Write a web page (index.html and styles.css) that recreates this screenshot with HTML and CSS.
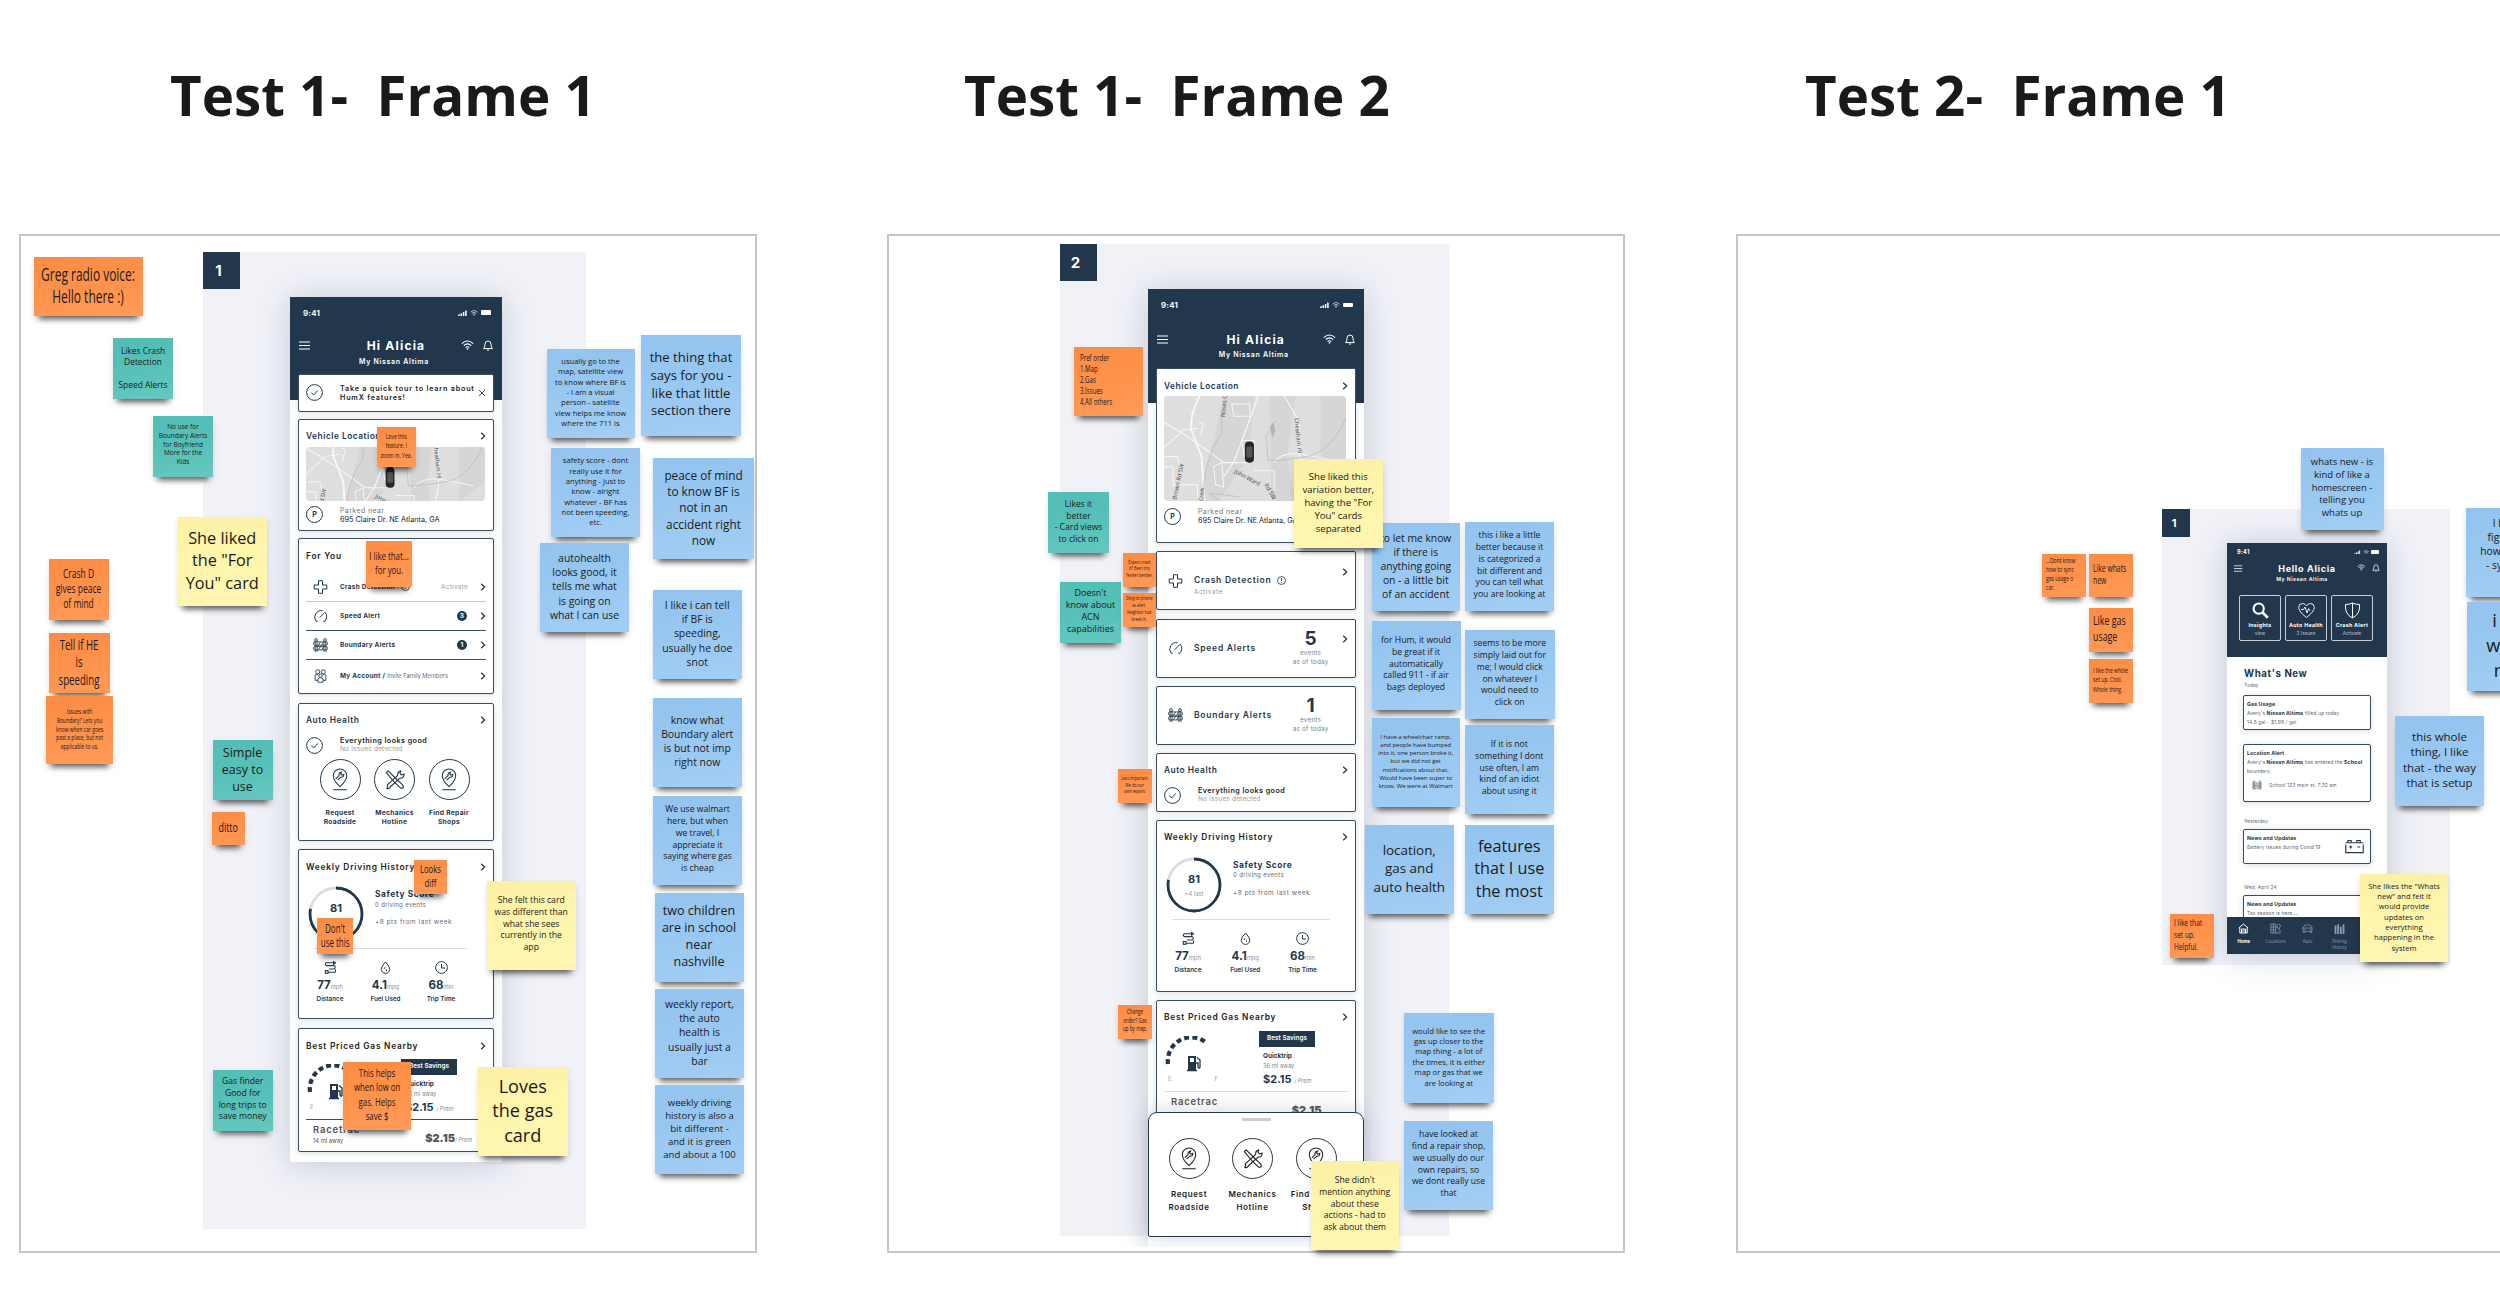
FILE: index.html
```html
<!DOCTYPE html>
<html lang="en">
<head>
  <meta charset="UTF-8" />
  <meta name="viewport" content="width=device-width, initial-scale=1.0"/>
  <title>User testing board</title>
  <link rel="stylesheet" href="styles.css">
</head>
<body>
  <!-- icons -->
  <svg class="defs">
    <symbol id="chev" viewBox="0 0 6 8"><path d="M1.2 .8 4.6 4 1.2 7.2" fill="none" stroke="currentColor" stroke-width="1.3"/></symbol>
    <symbol id="menu" viewBox="0 0 11 9"><path d="M0 1h11M0 4.5h11M0 8h11" stroke="currentColor" stroke-width="1"/></symbol>
    <symbol id="signal" viewBox="0 0 9 6"><path d="M1 6V4.3M3.3 6V3.3M5.6 6V2M7.9 6V.5" stroke="currentColor" stroke-width="1.5"/></symbol>
    <symbol id="wifi" viewBox="0 0 13 10"><path d="M.8 3.6q5.7-5.2 11.4 0M2.7 5.6q3.8-3.4 7.6 0M4.6 7.5q1.9-1.6 3.8 0" fill="none" stroke="currentColor" stroke-width="1.1"/><circle cx="6.5" cy="8.9" r=".8" fill="currentColor"/></symbol>
    <symbol id="bell" viewBox="0 0 10 11"><path d="M.6 8.6h8.8Q8 7.2 8 4.2 8 1 5 1 2 1 2 4.2 2 7.2.6 8.6ZM4 9.8q1 .9 2 0" fill="none" stroke="currentColor" stroke-width="1"/></symbol>
    <symbol id="check" viewBox="0 0 17 17"><circle cx="8.5" cy="8.5" r="7.9" fill="none" stroke="currentColor" stroke-width="1"/><path d="M5.3 8.6 7.6 11l4.2-4.6" fill="none" stroke="currentColor" stroke-width="1"/></symbol>
    <symbol id="close" viewBox="0 0 8 8"><path d="M1 1l6 6M7 1 1 7" stroke="currentColor" stroke-width=".8"/></symbol>
    <symbol id="cross" viewBox="0 0 14 14"><path d="M5 .7h4V5h4.3v4H9v4.3H5V9H.7V5H5Z" fill="none" stroke="currentColor" stroke-width="1" stroke-linejoin="round"/></symbol>
    <symbol id="speed" viewBox="0 0 15 13"><path d="M3.2 11.8A6.6 6.6 0 0 1 9.6 1.2M12 2.6a6.6 6.6 0 0 1-.3 9.2M3.2 11.8h1.5M11.7 11.8h-1.5" fill="none" stroke="currentColor" stroke-width="1"/><path d="M6.8 8.2 11.4 3.2" stroke="currentColor" stroke-width="1"/></symbol>
    <symbol id="fence" viewBox="0 0 14 13"><g fill="none" stroke="currentColor" stroke-width=".8"><circle cx="2.8" cy="1.8" r="1.3"/><circle cx="11.2" cy="1.8" r="1.3"/><rect x=".6" y="3.6" width="12.8" height="3.1" rx="1"/><rect x=".6" y="8" width="12.8" height="3.1" rx="1"/><path d="M2 3v10M3.8 3v10M10.2 3v10M12 3v10M5 6.7l2-3M8 6.7l2-3M5 11l2-3M8 11l2-3"/></g></symbol>
    <symbol id="people" viewBox="0 0 12 13"><g fill="none" stroke="currentColor" stroke-width=".8"><circle cx="3.4" cy="2.6" r="1.9"/><circle cx="8.6" cy="2.6" r="1.9"/><circle cx="6" cy="6.2" r="1.6"/><path d="M1 10.5V5.5q1.4-1 3 0M11 10.5V5.5q-1.4-1-3 0M3.6 12.3V9q2.4-2 4.8 0v3.3ZM1 10.5h2.6M8.4 10.5H11"/></g></symbol>
    <symbol id="pin" viewBox="0 0 16 24"><g fill="none" stroke="currentColor" stroke-width="1.1"><path d="M8 19.5Q1 13 1 8a7 7 0 0 1 14 0q0 5-7 11.500Z"/><path d="M3.600 11.400 7 8Q6.500 5 9.700 4.200L8.700 6.400 10 7.500l2-1Q12 10 8.700 9.700L5.500 12.700"/><path d="M1 22.700h14"/></g></symbol>
    <symbol id="tools" viewBox="0 0 22 22"><g fill="none" stroke="currentColor" stroke-width="1.200" stroke-linejoin="round"><path d="M1.500 3.500 3.500 1.500 13 11l6.500 6q1.500 2.200-.3 3.500-1.400.8-3-.8L10 13.500Z"/><path d="M2.500 17 14 6.500q-.6-4 3.500-5L16.500 4l1.500 2 3-1q.2 4.500-4.500 4.500L6 19q-.8 2.500-4 2l1-2.500Z"/></g></symbol>
    <symbol id="route" viewBox="0 0 12 13"><g fill="none" stroke="currentColor" stroke-width="1.100"><path d="M1.500 1.800H9M1.500 1.800Q0 4.200 2 4.600H9.500Q12 6 9.500 8H4.500M3.500 11.200H11M11 11.200V8.500"/><rect x=".8" y="9.600" width="2.700" height="2.700"/><path d="M9 .4v2.800L11 1.800Z"/></g></symbol>
    <symbol id="drop" viewBox="0 0 11 13"><path d="M5.500 1Q1.200 5.500 1.200 8.300a4.300 4.100 0 0 0 8.600 0Q9.800 5.500 5.500 1ZM5 6.200 4 8M6.500 8.500v1.500" fill="none" stroke="currentColor" stroke-width="1"/></symbol>
    <symbol id="clock" viewBox="0 0 13 13"><circle cx="6.500" cy="6.500" r="5.900" fill="none" stroke="currentColor"/><path d="M6.500 3v4H10" fill="none" stroke="currentColor"/></symbol>
    <symbol id="info" viewBox="0 0 9 9"><circle cx="4.500" cy="4.500" r="4" fill="none" stroke="currentColor" stroke-width=".8"/><path d="M4.500 2v3M4.500 6v1" stroke="currentColor" stroke-width=".9"/></symbol>
    <symbol id="gauge" viewBox="0 0 56 44">
      <path d="M4 28A23.500 23.500 0 0 1 42 6.500" fill="none" stroke="#22374b" stroke-width="4.200" stroke-dasharray="5 3.200"/>
      <path d="M24 20h8v14h-8Z" fill="#22374b"/><path d="M26 22h4v4h-4Z" fill="#fff"/><path d="M23 34.500h10M33 21.500l3 2.500v7.500q-1.500 1.500-2-.5V27h-2" fill="none" stroke="#22374b" stroke-width="1.300"/>
    </symbol>
    <symbol id="ring" viewBox="0 0 56 56">
      <circle cx="28" cy="28" r="26" fill="none" stroke="#ddd" stroke-width="2.800"/>
      <circle cx="28" cy="28" r="26" fill="none" stroke="#22374b" stroke-width="2.800" stroke-dasharray="127 200" transform="rotate(-90 28 28)"/>
    </symbol>
    <symbol id="glass" viewBox="0 0 14 14"><circle cx="5.500" cy="5.500" r="4.200" fill="none" stroke="currentColor" stroke-width="1.700"/><path d="M8.700 8.700 13 13" stroke="currentColor" stroke-width="2.200"/></symbol>
    <symbol id="heart" viewBox="0 0 17 16"><path d="M8.500 15Q.7 9 .7 5 .7 1 4.600 1q2.700 0 3.900 2.400Q9.700 1 12.400 1q3.900 0 3.900 4 0 4-7.800 10ZM3 7h2.500L7 4.500l2 6L10.500 6 12 8.500" fill="none" stroke="currentColor" stroke-width=".9"/></symbol>
    <symbol id="shield" viewBox="0 0 16 17"><path d="M8 1Q5 2.500 1 2.500 0 12 8 16 16 12 15 2.500 11 2.500 8 1ZM8 1v15" fill="none" stroke="currentColor" stroke-width="1"/></symbol>
    <symbol id="battery" viewBox="0 0 20 15"><path d="M.8 5.500V14h18.400V5.500M.8 3.500h18.400M3 3V1.200h3.500V3M12.500 3V1.200H16V3M4.500 8h3M6 6.500v3M13 8h3" fill="none" stroke="#22374b" stroke-width="1.200"/></symbol>
    <symbol id="home" viewBox="0 0 11 11"><path d="M.8 5 5.500 1l4.700 4M1.800 4.500V10h7.400V4.500M3.500 10V6h4v4M3.500 8h4" fill="none" stroke="currentColor" stroke-width="1"/></symbol>
    <symbol id="loc" viewBox="0 0 11 11"><path d="M.8 1h5v9h-5ZM.8 4h5M.8 7h5M3.300 1v9M7 5V2.500a1.800 1.800 0 0 1 3.400 0L9 6.500 7 4M5.800 10H10V7" fill="none" stroke="currentColor" stroke-width=".8"/></symbol>
    <symbol id="car" viewBox="0 0 12 10"><path d="M1.200 4.500 3 1.200h6l1.800 3.300V8H1.200ZM0 4.500h12M1.500 8v1.500h1.700V8M8.800 8v1.500h1.700V8M2.500 6.200h1.500M8 6.200h1.500" fill="none" stroke="currentColor" stroke-width=".8"/></symbol>
    <symbol id="bars" viewBox="0 0 9 9"><path d="M1.200 9V2M3.400 9V1M5.600 9V3M7.800 9V1" stroke="currentColor" stroke-width="1.500"/></symbol>
    <symbol id="map" viewBox="0 0 182 104" preserveAspectRatio="xMidYMid slice">
      <path d="M0 0h182v104H0Z" fill="#dedede"/>
      <path d="M60 0h30l-5 60-30 44H36ZM106 0h25l-8 62 8 42h-24ZM156 0h26v60l-26 20Z" fill="#d6d6d6"/>
      <g fill="none" stroke="#f7f7f7">
        <path d="M36 0q-10 20-8 34l10 26 3 44" stroke-width="2"/>
        <path d="M94 0Q80 40 70 65L60 80M120 0l14 24q4 40-4 60M0 26q20 10 60 40h24"  stroke-width="1.200"/>
        <path d="M0 52l20-18 14-2M2 60h12l4 14M10 88h24v12M68 8h18v12H70ZM36 26l4 1-3 12M78 44h12v14H80ZM50 70l8-4 2 24-8-2ZM110 66q8-14 40-6l20 4M90 74h20v20M0 70h10v20" stroke-width="1"/>
      </g>
      <g fill="none" stroke="#bdbdbd" stroke-width=".8"><path d="M58 14v22q-20 30-18 68M76 100l-30-4 10 8M182 20q-16 36-40 40t-38 4l-2-24 10-16"/></g>
      <path d="M106 30l3-4 2 8-3 8Z" fill="#b4b4b4"/>
      <rect x="81" y="45" width="9" height="21" rx="4" fill="#262626"/><rect x="82.500" y="50" width="6" height="11" rx="1.500" fill="#555"/>
      <g font-family="Open Sans" font-size="5.800" fill="#444">
        <text transform="translate(61 21) rotate(-84)">Noses C</text>
        <text transform="translate(130 22) rotate(84)">Cheatham Hi</text>
        <text transform="translate(13 103) rotate(-78)">Brown Rd SW</text>
        <text transform="translate(39 104) rotate(-84)" font-size="5">Creek</text>
        <text transform="translate(70 76) rotate(28)">John Ward</text><text transform="translate(100 88) rotate(60)">Rd SW</text>
      </g>
    </symbol>
  </svg>

  <main class="board">
    <h1 class="title t1">Test 1-&nbsp; Frame 1</h1>
    <h1 class="title t2">Test 1-&nbsp; Frame 2</h1>
    <h1 class="title t3">Test 2-&nbsp; Frame 1</h1>
    <section class="frame f1"></section>
    <section class="frame f2"></section>
    <section class="frame f3"></section>
    <div class="backdrop b1"><span class="tag">1</span></div>
    <div class="backdrop b2"><span class="tag">2</span></div>
    <div class="backdrop b3"><span class="tag small">1</span></div>

    <!-- phone 1 -->
    <article class="phone p1">
      <header class="head">
        <div class="status"><b>9:41</b><span class="sys"><svg class="sig"><use href="#signal"/></svg><svg class="wf"><use href="#wifi"/></svg><i class="batt"></i></span></div>
        <div class="hello"><svg class="menu"><use href="#menu"/></svg><h2>Hi Alicia</h2><span class="acts"><svg class="wifi"><use href="#wifi"/></svg><svg class="bell"><use href="#bell"/></svg></span></div>
        <p class="model">My Nissan Altima</p>
      </header>
      <div class="cards">
        <div class="card tour"><svg class="round"><use href="#check"/></svg><p>Take a quick tour to learn about<br>HumX features!</p><svg class="close"><use href="#close"/></svg></div>
        <div class="card vehicle">
          <h3 class="navy">Vehicle Location<svg class="chev"><use href="#chev"/></svg></h3>
          <svg class="map"><use href="#map"/></svg>
          <div class="line"><span class="park">P</span><p class="addr"><small>Parked near</small>695 Claire Dr. NE Atlanta, GA</p></div>
        </div>
        <div class="card foryou">
          <h3>For You</h3>
          <ul>
            <li><svg><use href="#cross"/></svg><b>Crash Detection</b><svg class="info"><use href="#info"/></svg><em>Activate</em><svg class="chev"><use href="#chev"/></svg></li>
            <li><svg><use href="#speed"/></svg><b>Speed Alert</b><span class="count">3</span><svg class="chev"><use href="#chev"/></svg></li>
            <li><svg><use href="#fence"/></svg><b>Boundary Alerts</b><span class="count">1</span><svg class="chev"><use href="#chev"/></svg></li>
            <li><svg class="ppl"><use href="#people"/></svg><b>My Account / <i>Invite Family Members</i></b><svg class="chev end"><use href="#chev"/></svg></li>
          </ul>
        </div>
        <div class="card health">
          <h3 class="navy">Auto Health<svg class="chev"><use href="#chev"/></svg></h3>
          <div class="line"><svg class="round"><use href="#check"/></svg><p class="ok"><b>Everything looks good</b><small>No issues detected</small></p></div>
          <div class="actions">
            <div><span class="disc"><svg><use href="#pin"/></svg></span>Request<br>Roadside</div>
            <div><span class="disc"><svg><use href="#tools"/></svg></span>Mechanics<br>Hotline</div>
            <div><span class="disc"><svg><use href="#pin"/></svg></span>Find Repair<br>Shops</div>
          </div>
        </div>
        <div class="card weekly">
          <h3>Weekly Driving History<svg class="chev"><use href="#chev"/></svg></h3>
          <div class="score"><div class="ring"><svg><use href="#ring"/></svg><p>81<small>+4 last</small></p></div>
            <div class="pts"><b>Safety Score</b><span>0 driving events</span><span class="up">+8 pts from last week</span></div></div>
          <div class="stats">
            <div><svg><use href="#route"/></svg><p>77<small>mph</small></p>Distance</div>
            <div><svg><use href="#drop"/></svg><p>4.1<small>mpg</small></p>Fuel Used</div>
            <div><svg><use href="#clock"/></svg><p>68<small>min</small></p>Trip Time</div>
          </div>
        </div>
        <div class="card gas">
          <h3>Best Priced Gas Nearby<svg class="chev"><use href="#chev"/></svg></h3>
          <div class="best"><div class="fuel"><svg><use href="#gauge"/></svg><p><span>E</span><span>F</span></p></div>
            <div class="deal"><span class="save">Best Savings</span><b>Quicktrip</b><small>36 mi away</small><p>$2.15 <i>/ Prem</i></p></div></div>
          <div class="next"><p>Racetrac<small>14 mi away</small></p><strong>$2.15<i>/ Prem</i></strong></div>
        </div>
      </div>
    </article>

    <!-- phone 2 -->
    <article class="phone p2">
      <header class="head">
        <div class="status"><b>9:41</b><span class="sys"><svg class="sig"><use href="#signal"/></svg><svg class="wf"><use href="#wifi"/></svg><i class="batt"></i></span></div>
        <div class="hello"><svg class="menu"><use href="#menu"/></svg><h2>Hi Alicia</h2><span class="acts"><svg class="wifi"><use href="#wifi"/></svg><svg class="bell"><use href="#bell"/></svg></span></div>
        <p class="model">My Nissan Altima</p>
      </header>
      <div class="cards">
        <div class="card vehicle">
          <h3 class="navy">Vehicle Location<svg class="chev"><use href="#chev"/></svg></h3>
          <svg class="map"><use href="#map"/></svg>
          <div class="line"><span class="park">P</span><p class="addr"><small>Parked near</small>695 Claire Dr. NE Atlanta, GA</p></div>
        </div>
        <div class="card alert"><svg><use href="#cross"/></svg><p>Crash Detection <svg class="info"><use href="#info"/></svg><small>Activate</small></p><svg class="chev"><use href="#chev"/></svg></div>
        <div class="card alert"><svg><use href="#speed"/></svg><p>Speed Alerts</p><div class="num"><b>5</b>events<br>as of today</div><svg class="chev"><use href="#chev"/></svg></div>
        <div class="card alert"><svg><use href="#fence"/></svg><p>Boundary Alerts</p><div class="num"><b>1</b>events<br>as of today</div><i class="chev"></i></div>
        <div class="card health">
          <h3 class="navy">Auto Health<svg class="chev"><use href="#chev"/></svg></h3>
          <div class="line"><svg class="round"><use href="#check"/></svg><p class="ok"><b>Everything looks good</b><small>No issues detected</small></p></div>
        </div>
        <div class="card weekly">
          <h3>Weekly Driving History<svg class="chev"><use href="#chev"/></svg></h3>
          <div class="score"><div class="ring"><svg><use href="#ring"/></svg><p>81<small>+4 last</small></p></div>
            <div class="pts"><b>Safety Score</b><span>0 driving events</span><span class="up">+8 pts from last week</span></div></div>
          <div class="stats">
            <div><svg><use href="#route"/></svg><p>77<small>mph</small></p>Distance</div>
            <div><svg><use href="#drop"/></svg><p>4.1<small>mpg</small></p>Fuel Used</div>
            <div><svg><use href="#clock"/></svg><p>68<small>min</small></p>Trip Time</div>
          </div>
        </div>
        <div class="card gas">
          <h3>Best Priced Gas Nearby<svg class="chev"><use href="#chev"/></svg></h3>
          <div class="best"><div class="fuel"><svg><use href="#gauge"/></svg><p><span>E</span><span>F</span></p></div>
            <div class="deal"><span class="save">Best Savings</span><b>Quicktrip</b><small>36 mi away</small><p>$2.15 <i>/ Prem</i></p></div></div>
          <div class="next"><p>Racetrac</p><strong>$2.15</strong></div>
        </div>
      </div>
      <div class="sheet">
        <i class="handle"></i>
        <div class="actions">
          <div><span class="disc"><svg><use href="#pin"/></svg></span>Request<br>Roadside</div>
          <div><span class="disc"><svg><use href="#tools"/></svg></span>Mechanics<br>Hotline</div>
          <div><span class="disc"><svg><use href="#pin"/></svg></span>Find Repair<br>Shops</div>
        </div>
      </div>
    </article>

    <!-- phone 3 -->
    <article class="phone p3">
      <header class="head">
        <div class="status"><b>9:41</b><span class="sys"><svg class="sig"><use href="#signal"/></svg><svg class="wf"><use href="#wifi"/></svg><i class="batt"></i></span></div>
        <div class="hello"><svg class="menu"><use href="#menu"/></svg><h2>Hello Alicia</h2><span class="acts"><svg class="wifi"><use href="#wifi"/></svg><svg class="bell"><use href="#bell"/></svg></span></div>
        <p class="model">My Nissan Altima</p>
        <div class="tiles">
          <div><svg><use href="#glass"/></svg><b>Insights</b><small>view</small></div>
          <div><svg><use href="#heart"/></svg><b>Auto Health</b><small>2 Issues</small></div>
          <div><svg><use href="#shield"/></svg><b>Crash Alert</b><small>Activate</small></div>
        </div>
      </header>
      <div class="news">
        <h3>What's New</h3>
        <time>Today</time>
        <div class="card c1"><b>Gas Usage</b>Avery's <b class="in">Nissan Altima</b> filled up today<br>14.5 gal - $1.99 / gal</div>
        <div class="card c2"><b>Location Alert</b>Avery's <b class="in">Nissan Altima</b> has entered the <b class="in">School</b><br>boundary<p><svg><use href="#fence"/></svg>School 123 main st. 7:32 am</p></div>
        <time class="yest">Yesterday</time>
        <div class="card c3"><div><b>News and Updates</b>Battery issues during Covid 19</div><svg><use href="#battery"/></svg></div>
        <time class="wed">Wed, April 24</time>
        <div class="card c4"><b>News and Updates</b>Tax season is here....</div>
      </div>
      <nav>
        <span class="on"><svg><use href="#home"/></svg>Home</span>
        <span><svg><use href="#loc"/></svg>Locations</span>
        <span><svg><use href="#car"/></svg>Auto</span>
        <span><svg><use href="#bars"/></svg>Driving<br>History</span>
        <span></span>
      </nav>
    </article>

    <!-- notes, frame 1 -->
    <div class="note orange n1"><p>Greg radio voice:<br>Hello there :)</p></div>
    <div class="note teal n2"><p>Likes Crash<br>Detection<br><br>Speed Alerts</p></div>
    <div class="note teal n3"><p>No use for<br>Boundary Alerts<br>for Boyfriend<br>More for the<br>Kids</p></div>
    <div class="note yellow n4"><p>She liked<br>the "For<br>You" card</p></div>
    <div class="note orange n5"><p>Crash D<br>gives peace<br>of mind</p></div>
    <div class="note orange n6"><p>Tell if HE<br>is<br>speeding</p></div>
    <div class="note orange n7"><p>Issues with<br>Boundary? Lets you<br>know when car goes<br>past a place, but not<br>applicable to us.</p></div>
    <div class="note teal n8"><p>Simple<br>easy to<br>use</p></div>
    <div class="note orange n9"><p>ditto</p></div>
    <div class="note teal n10"><p>Gas finder<br>Good for<br>long trips to<br>save money</p></div>
    <div class="note orange n11"><p>Love this<br>feature. I<br>zoom in. Yea.</p></div>
    <div class="note orange n12"><p>I like that...<br>for you.</p></div>
    <div class="note orange n13"><p>Looks<br>diff</p></div>
    <div class="note orange n14"><p>Don't<br>use this</p></div>
    <div class="note orange n15"><p>This helps<br>when low on<br>gas. Helps<br>save $</p></div>
    <div class="note yellow n16"><p>She felt this card<br>was different than<br>what she sees<br>currently in the<br>app</p></div>
    <div class="note yellow n17"><p>Loves<br>the gas<br>card</p></div>
    <div class="note blue n18"><p>usually go to the<br>map, satellite view<br>to know where BF is<br>- I am a visual<br>person - satellite<br>view helps me know<br>where the 711 is</p></div>
    <div class="note blue n19"><p>the thing that<br>says for you -<br>like that little<br>section there</p></div>
    <div class="note blue n20"><p>safety score - dont<br>really use it for<br>anything - just to<br>know - alright<br>whatever - BF has<br>not been speeding,<br>etc.</p></div>
    <div class="note blue n21"><p>peace of mind<br>to know BF is<br>not in an<br>accident right<br>now</p></div>
    <div class="note blue n22"><p>autohealth<br>looks good, it<br>tells me what<br>is going on<br>what I can use</p></div>
    <div class="note blue n23"><p>I like i can tell<br>if BF is<br>speeding,<br>usually he doe<br>snot</p></div>
    <div class="note blue n24"><p>know what<br>Boundary alert<br>is but not imp<br>right now</p></div>
    <div class="note blue n25"><p>We use walmart<br>here, but when<br>we travel, I<br>appreciate it<br>saying where gas<br>is cheap</p></div>
    <div class="note blue n26"><p>two children<br>are in school<br>near<br>nashville</p></div>
    <div class="note blue n27"><p>weekly report,<br>the auto<br>health is<br>usually just a<br>bar</p></div>
    <div class="note blue n28"><p>weekly driving<br>history is also a<br>bit different -<br>and it is green<br>and about a 100</p></div>

    <!-- notes, frame 2 -->
    <div class="note orange left n30"><p>Pref order<br>1.Map<br>2.Gas<br>3.Issues<br>4.All others</p></div>
    <div class="note teal n31"><p>Likes it<br>better<br>- Card views<br>to click on</p></div>
    <div class="note teal n32"><p>Doesn't<br>know about<br>ACN<br>capabilities</p></div>
    <div class="note orange n33"><p>Expect crash<br>d? Even tiny<br>fender bender.</p></div>
    <div class="note orange n34"><p>Ding on phone<br>as alert.<br>Neighbor had<br>break in.</p></div>
    <div class="note blue n36"><p>to let me know<br>if there is<br>anything going<br>on - a little bit<br>of an accident</p></div>
    <div class="note yellow n35"><p>She liked this<br>variation better,<br>having the "For<br>You" cards<br>separated</p></div>
    <div class="note blue n37"><p>this i like a little<br>better because it<br>is categorized a<br>bit different and<br>you can tell what<br>you are looking at</p></div>
    <div class="note blue n38"><p>for Hum, it would<br>be great if it<br>automatically<br>called 911 - if air<br>bags deployed</p></div>
    <div class="note blue n39"><p>seems to be more<br>simply laid out for<br>me; I would click<br>on whatever I<br>would need to<br>click on</p></div>
    <div class="note blue n40"><p>I have a wheelchair ramp,<br>and people have bumped<br>into it, one person broke it,<br>but we did not get<br>notifications about that.<br>Would have been super to<br>know. We were at Walmart</p></div>
    <div class="note blue n41"><p>If it is not<br>something I dont<br>use often, I am<br>kind of an idiot<br>about using it</p></div>
    <div class="note blue n42"><p>location,<br>gas and<br>auto health</p></div>
    <div class="note blue n43"><p>features<br>that I use<br>the most</p></div>
    <div class="note orange n44"><p>Less important<br>We do our<br>own repairs</p></div>
    <div class="note orange n45"><p>Change<br>order? Gas<br>up by map.</p></div>
    <div class="note blue n46"><p>would like to see the<br>gas up closer to the<br>map thing - a lot of<br>the times, it is either<br>map or gas that we<br>are looking at</p></div>
    <div class="note blue n47"><p>have looked at<br>find a repair shop,<br>we usually do our<br>own repairs, so<br>we dont really use<br>that</p></div>
    <div class="note yellow n48"><p>She didn't<br>mention anything<br>about these<br>actions - had to<br>ask about them</p></div>

    <!-- notes, frame 3 -->
    <div class="note orange left n50"><p>...Dont know<br>how to sync<br>gas usage o<br>car.</p></div>
    <div class="note orange left n51"><p>Like whats<br>new</p></div>
    <div class="note orange left n52"><p>Like gas<br>usage</p></div>
    <div class="note orange left n53"><p>I like the whole<br>set up. Cool.<br>Whole thing.</p></div>
    <div class="note orange left n54"><p>I like that<br>set up.<br>Helpful.</p></div>
    <div class="note blue n55"><p>whats new - is<br>kind of like a<br>homescreen -<br>telling you<br>whats up</p></div>
    <div class="note blue n56"><p>I had to<br>figure out<br>how to use it<br>- sync it all<br>up</p></div>
    <div class="note blue n57"><p>i like<br>whats<br>new</p></div>
    <div class="note blue n58"><p>this whole<br>thing, I like<br>that - the way<br>that is setup</p></div>
    <div class="note yellow n59"><p>She likes the "Whats<br>new" and felt it<br>would provide<br>updates on<br>everything<br>happening in the<br>system</p></div>
  </main>
</body>
</html>
```
FILE: styles.css
```css
* {
  box-sizing: border-box;
  margin: 0;
  padding: 0;
}

body {
  background: #fff;
  font-family: 'Open Sans', sans-serif;
  color: #1a1a1a;
  overflow: hidden;
}

.defs {
  position: absolute;
  width: 0;
  height: 0;
}

svg {
  display: block;
  flex: none;
}

.board {
  position: relative;
  width: 2500px;
  height: 1307px;
  overflow: hidden;
}

/* frame titles */
.title {
  position: absolute;
  top: 57px;
  font-size: 54.7px;
  line-height: 76px;
  font-weight: 700;
  white-space: nowrap;
}
.t1 { left: 170px; }
.t2 { left: 964px; }
.t3 { left: 1805px; }

.frame {
  position: absolute;
  top: 234px;
  width: 738px;
  height: 1019px;
  border: 2px solid #c6c6c6;
}
.f1 { left: 19px; }
.f2 { left: 887px; }
.f3 { left: 1736px; width: 800px; }

.backdrop {
  position: absolute;
  background: #f1f2f8;
}
.b1 { left: 203px; top: 252px; width: 383px; height: 977px; }
.b2 { left: 1060px; top: 244px; width: 389px; height: 992px; }
.b3 { left: 2162px; top: 509px; width: 288px; height: 456px; }

.tag {
  display: flex;
  align-items: center;
  justify-content: center;
  width: 37px;
  height: 37px;
  padding-right: 6px;
  background: #22374b;
  color: #fff;
  font: 700 15px Inter, sans-serif;
}
.tag.small {
  width: 28px;
  height: 28px;
  padding-right: 4px;
  font-size: 11px;
}

/* phones */
.phone {
  position: absolute;
  background: #fff;
  color: #22374b;
  font-family: Inter, sans-serif;
  white-space: nowrap;
  box-shadow: 0 2px 30px rgba(70, 85, 110, .26);
}
.p1 { left: 290px; top: 296.5px; width: 212px; height: 865px; }
.p2 { left: 1148px; top: 289px; width: 215.5px; height: 958px; clip-path: inset(-40px -40px 0); }
.p3 { left: 2227px; top: 543px; width: 160px; height: 411px; overflow: hidden; }

.head {
  height: 103px;
  background: #22374b;
  color: #fff;
}
.p2 .head { height: 114px; }

.status {
  display: flex;
  align-items: center;
  justify-content: space-between;
  height: 16px;
  margin: 0 11px 0 13px;
  position: relative;
  top: 8px;
  font-size: 7.8px;
  letter-spacing: .3px;
}
.sys {
  display: flex;
  align-items: center;
  gap: 3px;
}
.sig { width: 9px; height: 6px; }
.wf { width: 8px; height: 6px; }
.batt {
  width: 10px;
  height: 4.5px;
  border-radius: 1px;
  background: #fff;
}

.hello {
  display: grid;
  grid-template-columns: 48px 1fr 48px;
  align-items: center;
  height: 18px;
  margin-top: 24px;
  padding: 0 9px;
}
.p2 .hello { margin-top: 25px; }
.hello h2 {
  text-align: center;
  font-size: 12px;
  font-weight: 700;
  letter-spacing: 1.2px;
}
.acts {
  display: flex;
  justify-content: flex-end;
  gap: 9px;
}
.menu { width: 11px; height: 9px; }
.wifi { width: 13px; height: 10px; }
.bell { width: 10px; height: 11px; }
.model {
  text-align: center;
  font-size: 7px;
  font-weight: 600;
  letter-spacing: .7px;
  line-height: 13px;
  margin-right: 4px;
}

.cards {
  display: flex;
  flex-direction: column;
  margin: -26px 8px 0;
}
.p2 .cards { margin-top: -35px; }
.card {
  background: #fff;
  border: 1px solid #3a4c60;
  border-radius: 2px;
  box-shadow: 0 1px 6px rgba(60, 80, 110, .2);
  padding: 0 7px;
}
.card h3 {
  display: flex;
  align-items: center;
  justify-content: space-between;
  height: 33px;
  font-size: 8.4px;
  font-weight: 600;
  letter-spacing: .75px;
  color: #222;
}
.card h3.navy { color: #22374b; letter-spacing: .5px; }
.chev {
  width: 6px;
  height: 8px;
  color: #22374b;
}
.round { width: 17px; height: 17px; }

.tour {
  display: flex;
  align-items: center;
  height: 38px;
  font-size: 7.2px;
  line-height: 9px;
  font-weight: 600;
  letter-spacing: .8px;
  color: #222;
}
.tour .round { color: #22374b; }
.tour p { margin-left: 17px; flex: 1; }
.close { width: 8px; height: 8px; }

.vehicle {
  height: 112px;
  margin-top: 7px;
}
.p2 .vehicle { height: 175px; margin-top: 0; }
.vehicle h3 { height: 27px; padding-top: 6px; }
.map {
  width: 179px;
  height: 54px;
  border-radius: 4px;
  overflow: hidden;
}
.p2 .map { width: 182px; height: 105px; }
.line {
  display: flex;
  align-items: center;
  gap: 17px;
}
.vehicle .line { height: 28px; }
.p2 .vehicle .line { height: 30px; }
.park {
  width: 17px;
  height: 17px;
  border: 1px solid #22374b;
  border-radius: 50%;
  text-align: center;
  font-size: 7px;
  font-weight: 700;
  line-height: 15px;
}
.addr {
  font-size: 7.3px;
  line-height: 9px;
  color: #222;
}
.addr small {
  display: block;
  font-size: 7px;
  letter-spacing: .4px;
  color: #777;
}

.foryou {
  height: 156px;
  margin-top: 7.5px;
}
.foryou ul { list-style: none; }
.foryou li {
  display: flex;
  align-items: center;
  height: 29px;
  border-bottom: 1px solid #3a4c60;
  font-size: 6.4px;
  letter-spacing: .3px;
}
.foryou li:first-child { border-color: #c4c8cf; height: 30px; }
.foryou li:last-child { border: 0; height: 32px; }
.foryou li > svg:first-child { width: 15px; height: 14px; margin: 0 12px 0 7px; }
.foryou li i { font-style: normal; font-weight: 300; font-size: 5.8px; letter-spacing: 0; }
.foryou li > svg.info { width: 9px; height: 9px; margin-left: 6px; }
.foryou em {
  margin-left: auto;
  margin-right: 12px;
  font-style: normal;
  color: #9aa3b0;
}
.foryou li > svg.end { margin-left: auto; }
.count {
  width: 10px;
  height: 10px;
  margin-left: auto;
  margin-right: 13px;
  border-radius: 50%;
  background: #22374b;
  color: #fff;
  font-size: 6.5px;
  font-weight: 700;
  line-height: 10px;
  text-align: center;
}

.health {
  height: 138px;
  margin-top: 8.5px;
}
.p2 .health { height: 59px; margin-top: 8px; }
.health .line { height: 17px; }
.ok {
  font-size: 7.2px;
  line-height: 9.5px;
  letter-spacing: .45px;
  color: #222;
}
.ok b { font-weight: 600; }
.ok small {
  display: block;
  font-size: 6.5px;
  letter-spacing: .2px;
  color: #999;
}
.actions {
  display: flex;
  justify-content: space-between;
  margin: 5px 10px 0 7px;
  text-align: center;
  font-size: 6.7px;
  line-height: 9.7px;
  letter-spacing: .3px;
  font-weight: 700;
}
.actions div {
  width: 54px;
}
.disc {
  display: flex;
  align-items: center;
  justify-content: center;
  width: 41px;
  height: 41px;
  margin: 0 auto 9px;
  border: 1px solid #22374b;
  border-radius: 50%;
}
.disc svg { width: 20px; height: 23px; }

.weekly {
  height: 170px;
  margin-top: 8.5px;
}
.p2 .weekly { height: 172px; margin-top: 8px; }
.score {
  display: flex;
  height: 66px;
  margin-left: 8px;
  border-bottom: 1px solid #ddd;
  margin-right: 18px;
}
.ring {
  position: relative;
  width: 56px;
  height: 56px;
  margin: 3px 11px 0 -6px;
}
.ring svg { width: 56px; height: 56px; }
.ring p {
  position: absolute;
  inset: 14px 0 0;
  text-align: center;
  font-size: 11px;
  line-height: 16px;
  font-weight: 700;
}
.ring small {
  display: block;
  font-size: 5.8px;
  line-height: 14px;
  font-weight: 400;
  color: #999;
}
.pts {
  padding-top: 7px;
  font-size: 6px;
  line-height: 9.5px;
  letter-spacing: .35px;
}
.pts b { display: block; font-size: 8.3px; letter-spacing: .6px; }
.pts span { display: block; color: #667; }
.pts .up { margin-top: 9px; font-size: 6.4px; letter-spacing: .55px; }
.stats {
  display: flex;
  justify-content: space-between;
  margin: 12px 27px 0 6px;
  font-size: 6.3px;
  line-height: 10px;
  font-weight: 600;
  text-align: center;
}
.stats div { width: 36px; }
.stats svg { width: 13px; height: 13px; margin: 0 auto 4px; }
.stats p { font-size: 11.5px; line-height: 15px; font-weight: 700; }
.stats small { font-size: 5.8px; font-weight: 400; color: #8b94a0; }

.gas {
  height: 124px;
  margin-top: 9px;
}
.p2 .gas { height: 130px; margin-top: 8px; }
.best {
  display: flex;
  height: 58px;
  border-bottom: 1px solid #3a4c60;
}
.p2 .best { border-color: #ddd; }
.fuel svg { width: 56px; height: 44px; margin-top: 2px; }
.fuel { width: 94px; color: #aaa; font-size: 6px; line-height: 8px; }
.fuel p { display: flex; justify-content: space-between; width: 54px; padding-left: 4px; margin-top: -5px; }
.deal {
  margin-left: 0;
  margin-top: -3px;
  font-size: 6.4px;
  line-height: 9px;
}
.save {
  display: block;
  width: 56px;
  height: 16px;
  margin: 0 0 5px 1px;
  background: #22374b;
  color: #fff;
  font-size: 6.4px;
  line-height: 14px;
  font-weight: 600;
  text-align: center;
}
.deal b, .deal small { display: block; margin-left: 5px; }
.deal small { font-size: 5.8px; color: #888; }
.deal p { margin-left: 5px; font-size: 11px; line-height: 19px; font-weight: 700; }
.deal i, .next i { font-size: 5.5px; font-weight: 400; color: #888; }
.next {
  display: flex;
  justify-content: space-between;
  padding: 4px 14px 0 7px;
  font-size: 9.5px;
  font-weight: 600;
  letter-spacing: .8px;
  line-height: 12px;
  color: #555;
}
.next small { display: block; font-size: 5.8px; line-height: 10px; font-weight: 400; letter-spacing: 0; }
.next strong { margin-top: 8px; font-size: 11px; line-height: 12px; letter-spacing: 0; }
.p2 .next strong { margin-right: 12px; }

.alert {
  display: flex;
  align-items: center;
  height: 59px;
  margin-top: 8.3px;
}
.alert > svg:first-child { width: 15px; height: 14px; margin: 0 11px 0 4px; }
.alert p { flex: 1; font-size: 8.5px; line-height: 11px; font-weight: 600; letter-spacing: .75px; }
.alert p small { display: block; height: 0; font-size: 6px; font-weight: 400; color: #8b94a0; }
.alert .info { display: inline-block; width: 9px; height: 9px; margin-left: 3px; vertical-align: -2px; }
.alert > .chev { margin-bottom: 18px; }
.num {
  margin-right: 13px;
  text-align: center;
  font-size: 6.4px;
  line-height: 9.3px;
  letter-spacing: .2px;
  color: #7b8490;
}
.num b { display: block; font-size: 19px; line-height: 20px; color: #22374b; }

.sheet {
  position: absolute;
  left: 0;
  top: 823px;
  width: 216px;
  height: 125px;
  background: #fff;
  border: 1px solid #22374b;
  border-radius: 9px 9px 2px 2px;
  box-shadow: 0 0 20px rgba(70, 85, 110, .25);
}
.handle { display: block; width: 29px; height: 3px; margin: 5px auto 0; background: #ccc; }
.sheet .actions { margin: 17px 16px 0 9px; font-size: 8px; line-height: 12.6px; font-weight: 600; letter-spacing: .65px; color: #222; }
.sheet .actions div { width: 62px; }

/* phone 3 */
.p3 .head { height: 114px; }
.p3 .status { height: 12px; top: 3px; margin: 0 8px 0 10px; font-size: 5.6px; }
.p3 .sig, .p3 .wf { width: 6.5px; height: 4.5px; }
.p3 .sys { gap: 2px; }
.p3 .batt { width: 8px; height: 3.5px; }
.p3 .hello { height: 14px; margin-top: 6px; padding: 0 7px; grid-template-columns: 34px 1fr 34px; }
.p3 .hello h2 { font-size: 9px; letter-spacing: .7px; }
.p3 .menu, .p3 .wifi { width: 8.5px; height: 7px; }
.p3 .bell { width: 8px; height: 8px; }
.p3 .acts { gap: 7px; }
.p3 .model { font-size: 5.2px; line-height: 8px; letter-spacing: .5px; margin-right: 10px; }
.tiles {
  display: flex;
  gap: 4px;
  margin: 12px 12px 0;
}
.tiles div {
  width: 42px;
  height: 46px;
  padding-top: 6px;
  border: 1px solid #c7ced6;
  border-radius: 2px;
  text-align: center;
  font-size: 5.3px;
  line-height: 7.5px;
}
.tiles svg { width: 17px; height: 17px; margin: 0 auto 3px; }
.tiles b { display: block; letter-spacing: .3px; }
.tiles small { display: block; font-size: 4.8px; color: #b9c2cc; }
.news { padding: 11px 16px 0; height: 260px; font-size: 4.9px; line-height: 9px; letter-spacing: .12px; }
.news h3 { font-size: 9.7px; line-height: 12px; letter-spacing: .6px; padding-left: 1px; }
.news time { display: block; padding-left: 1px; line-height: 10px; font-size: 4.9px; color: #667; }
.news .card { padding: 4px 3px; color: #5a6675; }
.news .card b { display: block; color: #22374b; font-size: 5.2px; }
.news .card b.in { display: inline; }
.c1 { height: 35px; margin-top: 4.5px; }
.c2 { height: 58px; margin-top: 14.5px; }
.c2 p { display: flex; align-items: center; gap: 7px; height: 18px; padding-left: 5px; }
.c2 svg { width: 10px; height: 10px; }
.news .yest { margin-top: 14px; }
.news .c3 { display: flex; justify-content: space-between; height: 35px; margin-top: 3px; }
.c3 svg { width: 19px; height: 15px; margin: 5px 3px 0 0; }
.news .wed { margin-top: 17.5px; }
.c4 { height: 35px; margin-top: 3px; }
.p3 nav {
  position: relative;
  display: flex;
  height: 37px;
  padding: 6px 0 0 1px;
  background: #22374b;
  color: #8e9aa7;
  font-size: 4.4px;
  line-height: 5.5px;
  text-align: center;
}
.p3 nav span { width: 32px; }
.p3 nav .on { color: #fff; font-weight: 700; }
.p3 nav svg { width: 11px; height: 11px; margin: 0 auto 5px; }

/* sticky notes */
.note {
  position: absolute;
  display: flex;
  align-items: center;
  justify-content: center;
  text-align: center;
  line-height: 1.36;
  white-space: nowrap;
  padding-bottom: 2px;
  box-shadow: 0 8px 6px -5px rgba(0, 0, 0, .6), 0 3px 6px rgba(0, 0, 0, .1);
}
.orange { background: linear-gradient(170deg, #fb8c46, #ff9149 40%, #ff9a58); }
.teal { background: linear-gradient(170deg, #53beb6, #57c0b8 50%, #66c8c0); }
.yellow { background: linear-gradient(170deg, #fbf0a4, #fff5ab 40%, #fdf5b2); }
.blue { background: linear-gradient(170deg, #93c3ee, #98c7f1 45%, #a3cef4); }
/* tall narrow handwriting */
.orange { line-height: 1.22; }
.orange p { transform: scaleX(.68); }
.left { justify-content: flex-start; text-align: left; padding-left: 4px; }
.left p { transform-origin: left; }

.n1 { left: 33.5px; top: 257px; width: 109.5px; height: 59px; font-size: 17.6px; }
.n2 { left: 113px; top: 338px; width: 60px; height: 61px; font-size: 8.4px; }
.n3 { left: 153px; top: 415.5px; width: 60px; height: 61px; font-size: 6.5px; }
.n4 { left: 178px; top: 517px; width: 88.5px; height: 89px; font-size: 16.3px; }
.n5 { left: 49px; top: 559px; width: 60px; height: 61px; font-size: 12.5px; }
.n6 { left: 49px; top: 633px; width: 61px; height: 60px; font-size: 14.2px; }
.n7 { left: 46px; top: 696px; width: 67px; height: 68px; font-size: 7.3px; }
.n8 { left: 212.5px; top: 740px; width: 60px; height: 60px; font-size: 12.5px; }
.n9 { left: 212px; top: 812px; width: 33px; height: 33px; font-size: 13px; }
.n10 { left: 212.5px; top: 1070px; width: 60.5px; height: 61px; font-size: 8.6px; }
.n11 { left: 376.5px; top: 427px; width: 39.5px; height: 40px; font-size: 7.5px; }
.n12 { left: 366px; top: 541px; width: 46px; height: 46px; font-size: 11.5px; }
.n13 { left: 414px; top: 860px; width: 33px; height: 34px; font-size: 11.3px; }
.n14 { left: 317px; top: 918px; width: 36px; height: 36px; font-size: 11.7px; }
.n15 { left: 343px; top: 1061.5px; width: 68px; height: 68px; font-size: 11.5px; }
.n16 { left: 487px; top: 881px; width: 88.5px; height: 89px; font-size: 8.65px; }
.n17 { left: 478px; top: 1067px; width: 89.5px; height: 89px; font-size: 18.1px; }
.n18 { left: 546.5px; top: 349px; width: 88px; height: 88.5px; font-size: 7.6px; }
.n19 { left: 641px; top: 335px; width: 100px; height: 101px; font-size: 13.1px; }
.n20 { left: 551px; top: 448px; width: 89px; height: 89px; font-size: 7.6px; }
.n21 { left: 653px; top: 458px; width: 101px; height: 101px; font-size: 11.8px; }
.n22 { left: 540px; top: 543px; width: 89px; height: 89px; font-size: 10.4px; }
.n23 { left: 652.5px; top: 590px; width: 89.5px; height: 89px; font-size: 10.4px; }
.n24 { left: 653px; top: 697.5px; width: 88.5px; height: 89px; font-size: 10.4px; }
.n25 { left: 653px; top: 796px; width: 89px; height: 89px; font-size: 8.65px; }
.n26 { left: 654.5px; top: 892.5px; width: 89px; height: 89px; font-size: 12.5px; }
.n27 { left: 655px; top: 989px; width: 89px; height: 89px; font-size: 10.4px; }
.n28 { left: 655px; top: 1085px; width: 89px; height: 89px; font-size: 9.6px; }

.n30 { left: 1074px; top: 347px; width: 69px; height: 69px; font-size: 9px; padding-left: 6px; }
.n31 { left: 1048px; top: 492px; width: 61px; height: 60.5px; font-size: 8.5px; }
.n32 { left: 1060px; top: 582px; width: 61px; height: 60.5px; font-size: 9px; }
.n33 { left: 1123px; top: 553px; width: 33px; height: 33.5px; font-size: 5.6px; }
.n34 { left: 1123px; top: 593px; width: 33px; height: 33.5px; font-size: 5.6px; }
.n35 { left: 1294px; top: 459px; width: 88.5px; height: 89px; font-size: 9.6px; }
.n36 { left: 1371.5px; top: 522.5px; width: 88.5px; height: 88.5px; font-size: 10.3px; }
.n37 { left: 1465px; top: 522px; width: 89px; height: 89px; font-size: 8.65px; }
.n38 { left: 1371.5px; top: 621px; width: 89px; height: 89px; font-size: 8.65px; }
.n39 { left: 1465px; top: 630px; width: 89.5px; height: 89px; font-size: 8.65px; }
.n40 { left: 1371.5px; top: 718px; width: 88.5px; height: 89px; font-size: 5.95px; }
.n41 { left: 1465px; top: 725px; width: 88.5px; height: 89px; font-size: 8.65px; }
.n42 { left: 1365px; top: 825px; width: 88.5px; height: 89px; font-size: 13.4px; }
.n43 { left: 1465px; top: 825px; width: 88.5px; height: 89px; font-size: 16.2px; }
.n44 { left: 1118px; top: 769px; width: 33.5px; height: 34px; font-size: 5.6px; }
.n45 { left: 1118px; top: 1005px; width: 33.5px; height: 33.5px; font-size: 6.9px; }
.n46 { left: 1404px; top: 1013px; width: 89.5px; height: 89.5px; font-size: 7.65px; }
.n47 { left: 1404px; top: 1121px; width: 89px; height: 89px; font-size: 8.65px; }
.n48 { left: 1310.5px; top: 1161px; width: 88.5px; height: 89px; font-size: 8.65px; }

.n50 { left: 2042px; top: 553.5px; width: 43.5px; height: 43.5px; font-size: 7.4px; }
.n51 { left: 2089px; top: 553.5px; width: 43.5px; height: 43.5px; font-size: 10px; }
.n52 { left: 2089px; top: 608px; width: 43.5px; height: 43.5px; font-size: 13px; }
.n53 { left: 2089px; top: 659px; width: 44px; height: 44px; font-size: 7.4px; }
.n54 { left: 2170px; top: 914px; width: 44px; height: 43.5px; font-size: 9.7px; }
.n55 { left: 2300.5px; top: 448px; width: 83px; height: 82px; font-size: 9.5px; }
.n56 { left: 2466px; top: 507.5px; width: 90px; height: 89px; font-size: 10.3px; }
.n57 { left: 2467px; top: 602px; width: 89px; height: 89px; font-size: 18.2px; }
.n58 { left: 2395px; top: 716px; width: 89px; height: 89.5px; font-size: 11.5px; }
.n59 { left: 2360px; top: 873.5px; width: 88px; height: 88.5px; font-size: 7.6px; }
```
